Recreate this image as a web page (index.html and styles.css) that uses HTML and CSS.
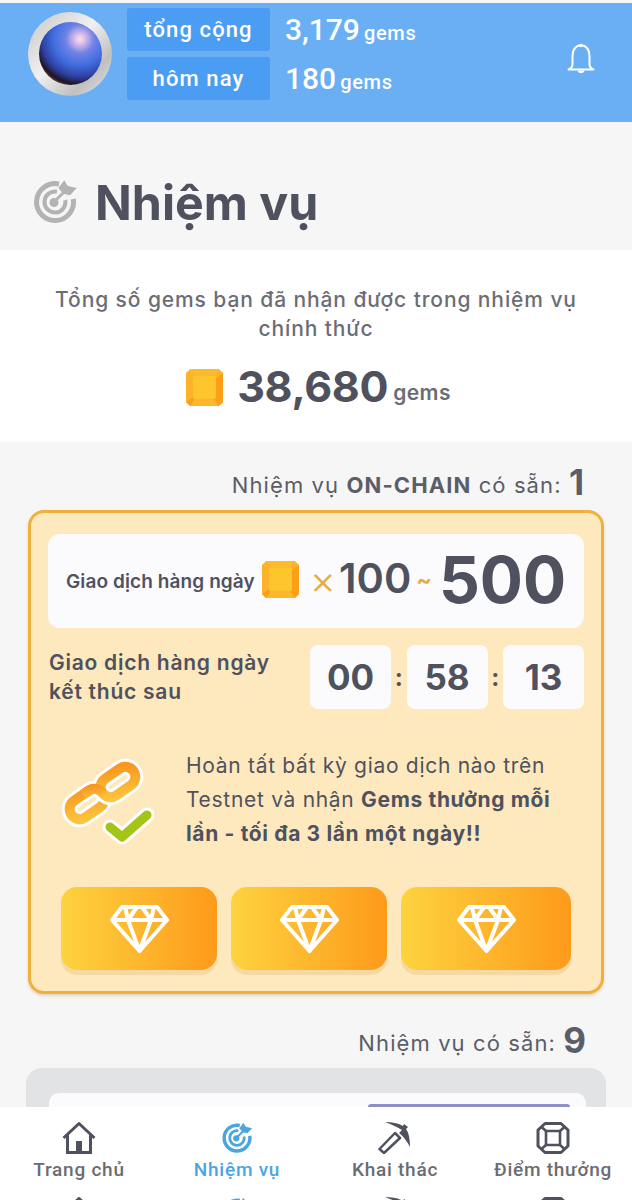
FILE: index.html
```html
<!DOCTYPE html>
<html lang="vi">
<head>
    <meta charset="UTF-8">
    <meta name="viewport" content="width=device-width, initial-scale=1.0">
    <title>Nhiệm vụ</title>
    <link rel="stylesheet" href="styles.css">
</head>
<body>
    <svg class="defs" width="0" height="0">
        <defs>
            <linearGradient id="chain" x1="0" y1="1" x2="1" y2="0">
                <stop offset="0" stop-color="#fcc63f"/>
                <stop offset="1" stop-color="#f7951d"/>
            </linearGradient>
            <radialGradient id="ball" cx="0.65" cy="0.27" r="0.82">
                <stop offset="0" stop-color="#fbe0ea"/>
                <stop offset="0.1" stop-color="#dcbce8"/>
                <stop offset="0.28" stop-color="#6f82e6"/>
                <stop offset="0.52" stop-color="#3f6ce0"/>
                <stop offset="0.74" stop-color="#2f3f9e"/>
                <stop offset="0.88" stop-color="#1e1428"/>
                <stop offset="1" stop-color="#8a4a24"/>
            </radialGradient>
            <linearGradient id="ring" x1="0" y1="0" x2="1" y2="1">
                <stop offset="0" stop-color="#c6c6c6"/>
                <stop offset="0.45" stop-color="#f0f0f0"/>
                <stop offset="0.75" stop-color="#c0c0c0"/>
                <stop offset="1" stop-color="#e6e6e6"/>
            </linearGradient>
            <symbol id="gem" viewBox="0 0 36 36">
                <path d="M4 0H32L36 4V32L32 36H4L0 32V4Z" fill="#fdb42a"/>
                <path d="M4 0H32L27 7H9Z" fill="#fdbb2c"/>
                <path d="M36 4V32L29 27V9Z" fill="#fc9f18"/>
                <path d="M0 4V32L7 27V9Z" fill="#fdb329"/>
                <path d="M4 36H32L27 29H9Z" fill="#fdb72a"/>
                <path d="M0 32L7 27L9 29L4 36Z M36 32L29 27L27 29L32 36Z" fill="#f8a01c"/>
                <rect x="7" y="7" width="22" height="22" fill="#fec62d"/>
            </symbol>
            <symbol id="target" viewBox="0 0 46 46">
                <path d="M27 5A18.500 18.500 0 1 0 41.300 20" fill="none" stroke="currentColor" stroke-width="5"/>
                <path d="M25 12.700A10.500 10.500 0 1 0 33.300 21" fill="none" stroke="currentColor" stroke-width="4"/>
                <circle cx="22" cy="23.500" r="4.500" fill="currentColor"/>
                <path d="M22 23L34 11" stroke="currentColor" stroke-width="3"/>
                <path d="M26.300 9L32.300 1.300L35.700 7L44.700 9L38 16.300L31.300 14.700Z" fill="currentColor"/>
            </symbol>
            <symbol id="diamond" viewBox="0 0 59 48">
                <path d="M12 2H47L57 15L29.500 46L2 15Z M2 15H57 M18 15L29.500 46L41 15 M15 2L18 15L27 2 M32 2L41 15L44 2" fill="none" stroke="#fff" stroke-width="4" stroke-linejoin="round"/>
            </symbol>
            <symbol id="home" viewBox="0 0 34 32">
                <path d="M1.500 16L17 1.500L32.500 16" fill="none" stroke="currentColor" stroke-width="3" stroke-linejoin="round"/>
                <path d="M5.500 13V30.500H28.500V13" fill="none" stroke="currentColor" stroke-width="3"/>
                <rect x="14" y="19" width="6" height="11" fill="currentColor"/>
            </symbol>
            <symbol id="pick" viewBox="0 0 34 32">
                <path d="M7 0C14 0 20 1 25 4L26 2L30 5L28 7C31 11 32 18 32 25C29 19 25 14 21 11L24 8C19 5 13 2 7 0Z" fill="currentColor"/>
                <path d="M17 11L22 16L6 31L1.500 27Z" fill="none" stroke="currentColor" stroke-width="2.500" stroke-linejoin="round"/>
            </symbol>
            <symbol id="jewel" viewBox="0 0 34 32">
                <g fill="none" stroke="currentColor" stroke-linejoin="round">
                    <path d="M9 1.500H25L32 8V24L25 30.500H9L2 24V8Z" stroke-width="3"/>
                    <rect x="10" y="9" width="14" height="14" stroke-width="2.600"/>
                    <path d="M5.500 5L10 9M28.500 5L24 9M5.500 27L10 23M28.500 27L24 23" stroke-width="2.600"/>
                </g>
            </symbol>
        </defs>
    </svg>

    <div class="page">
        <!-- top bar -->
        <header class="topbar">
            <svg class="avatar" viewBox="0 0 84 84">
                <circle cx="42" cy="42" r="42" fill="url(#ring)"/>
                <circle cx="42.500" cy="41.500" r="31.500" fill="url(#ball)"/>
            </svg>
            <div class="balances">
                <div class="balance-row">
                    <span class="balance-label">tổng cộng</span>
                    <span class="balance-value">3,179<small>gems</small></span>
                </div>
                <div class="balance-row">
                    <span class="balance-label">hôm nay</span>
                    <span class="balance-value">180<small>gems</small></span>
                </div>
            </div>
            <svg class="bell" viewBox="0 0 28 32">
                <path d="M14 2C8 3 5.500 7 5.500 13V21C5.500 24 4 25.500 1.500 26.500H26.500C24 25.500 22.500 24 22.500 21V13C22.500 7 20 3 14 2Z" fill="none" stroke="#fff" stroke-width="2" stroke-linejoin="round"/>
                <circle cx="14" cy="2.500" r="1.800" fill="#fff"/>
                <path d="M10.500 27.500H17.500C17 31 11 31 10.500 27.500Z" fill="#fff"/>
            </svg>
        </header>

        <section class="title-band">
            <svg class="title-icon"><use href="#target"/></svg>
            <h1>Nhiệm vụ</h1>
        </section>

        <section class="total">
            <p>Tổng số gems bạn đã nhận được trong nhiệm vụ<br>chính thức</p>
            <div class="total-amount">
                <svg class="gem-large"><use href="#gem"/></svg>
                <strong>38,680</strong><span>gems</span>
            </div>
        </section>

        <section class="missions">
            <div class="count">Nhiệm vụ <b>ON-CHAIN</b> có sẵn: <em>1</em></div>

            <div class="card">
                <div class="reward">
                    <span class="reward-name">Giao dịch hàng ngày</span>
                    <svg class="gem-large"><use href="#gem"/></svg>
                    <span class="reward-x">×</span>
                    <span class="reward-min">100</span>
                    <span class="reward-tilde">~</span>
                    <span class="reward-max">500</span>
                </div>

                <div class="timer">
                    <div class="timer-text">Giao dịch hàng ngày<br>kết thúc sau</div>
                    <div class="timer-boxes">
                        <span class="time-box">00</span><span class="time-sep">:</span>
                        <span class="time-box">58</span><span class="time-sep">:</span>
                        <span class="time-box">13</span>
                    </div>
                </div>

                <div class="desc">
                    <svg class="chain" viewBox="0 0 92 92">
                        <g fill="none">
                            <rect class="link-edge" x="6" y="40" width="38" height="20" rx="10" transform="rotate(-35 25 50)"/>
                            <rect class="link-fill" x="6" y="40" width="38" height="20" rx="10" transform="rotate(-35 25 50)"/>
                            <rect class="link-edge" x="37" y="18" width="38" height="20" rx="10" transform="rotate(-35 56 28)"/>
                            <rect class="link-fill" x="37" y="18" width="38" height="20" rx="10" transform="rotate(-35 56 28)"/>
                            <path class="link-fill" d="M27 40H34A10 10 0 0 1 44 50" transform="rotate(-35 25 50)"/>
                            <path d="M48 73L60 83L85 61" stroke="#fff" stroke-width="15" stroke-linecap="round" stroke-linejoin="round"/>
                            <path d="M48 73L60 83L85 61" stroke="#a2c516" stroke-width="9" stroke-linecap="round" stroke-linejoin="round"/>
                        </g>
                    </svg>
                    <p>Hoàn tất bất kỳ giao dịch nào trên<br>Testnet và nhận <b>Gems thưởng mỗi<br>lần - tối đa 3 lần một ngày!!</b></p>
                </div>

                <div class="claims">
                    <div class="claim"><svg class="claim-icon"><use href="#diamond"/></svg></div>
                    <div class="claim"><svg class="claim-icon"><use href="#diamond"/></svg></div>
                    <div class="claim claim-wide"><svg class="claim-icon"><use href="#diamond"/></svg></div>
                </div>
            </div>

            <div class="count count-next">Nhiệm vụ có sẵn: <em>9</em></div>

            <div class="card-grey">
                <div class="card-grey-inner">
                    <div class="tag"></div>
                </div>
            </div>
        </section>

        <!-- bottom nav sits over the list -->
        <nav class="bottom-nav">
            <a class="nav-item"><svg class="nav-icon"><use href="#home"/></svg>Trang chủ</a>
            <a class="nav-item active"><svg class="nav-icon"><use href="#target"/></svg>Nhiệm vụ</a>
            <a class="nav-item"><svg class="nav-icon"><use href="#pick"/></svg>Khai thác</a>
            <a class="nav-item"><svg class="nav-icon"><use href="#jewel"/></svg>Điểm thưởng</a>
            <a class="nav-item"><svg class="nav-icon"><use href="#home"/></svg></a>
            <a class="nav-item active"><svg class="nav-icon"><use href="#target"/></svg></a>
            <a class="nav-item"><svg class="nav-icon"><use href="#pick"/></svg></a>
            <a class="nav-item"><svg class="nav-icon"><use href="#jewel"/></svg></a>
        </nav>
    </div>
</body>
</html>
```

FILE: styles.css
```css
body {
    font-family: Inter, "Noto Sans", sans-serif;
    margin: 0;
    padding: 0;
    background-color: #f6f6f7;
    color: #4f525e;
}

.defs {
    display: block;
    height: 0;
}

.page {
    position: relative;
    height: 1200px;
    overflow: hidden;
    padding-top: 3px;
    box-sizing: border-box;
    background-color: #f6f6f7;
}

/* top bar */
.topbar {
    display: flex;
    height: 119px;
    padding: 5px 37px 0 28px;
    box-sizing: border-box;
    background-color: #6aaef3;
    color: #fff;
}

.avatar {
    width: 84px;
    height: 84px;
    margin: 4px 15px 0 0;
    flex: none;
}

.balances {
    display: flex;
    flex-direction: column;
    gap: 6px;
}

.balance-row {
    display: flex;
    align-items: center;
    gap: 15px;
}

.balance-label {
    width: 143px;
    height: 43px;
    line-height: 43px;
    text-align: center;
    background-color: #4a9df2;
    border-radius: 3px;
    font-family: Roboto, sans-serif;
    font-size: 22px;
    font-weight: 500;
    letter-spacing: 1.1px;
}

.balance-value {
    font-family: Roboto, sans-serif;
    font-size: 30px;
    font-weight: 500;
}

.balance-value small {
    font-size: 20px;
    margin-left: 4px;
    letter-spacing: 0.7px;
}

.bell {
    width: 28px;
    height: 32px;
    margin: 35px 0 0 auto;
}

/* title */
.title-band {
    display: flex;
    align-items: center;
    height: 128px;
    padding: 0 0 0 32px;
    box-sizing: border-box;
}

.title-icon {
    width: 46px;
    height: 46px;
    color: #b3b3b3;
    margin: 32px 17px 0 0;
}

h1 {
    margin: 34px 0 0;
    font-size: 48.3px;
    font-weight: 700;
    line-height: 60px;
}

/* total gems */
.total {
    height: 192px;
    padding-top: 35px;
    box-sizing: border-box;
    background-color: #fff;
    text-align: center;
}

.total p {
    margin: 0;
    font-size: 21px;
    font-weight: 500;
    line-height: 29px;
    color: #6b6d76;
    letter-spacing: 0.9px;
}

.total-amount {
    display: flex;
    align-items: center;
    justify-content: center;
    margin-top: 15px;
    padding-left: 5px;
}

.total-amount strong {
    font-size: 43px;
    font-weight: 700;
    line-height: 56px;
    letter-spacing: -0.3px;
    margin: 0 0 2px 14px;
}

.total-amount span {
    font-size: 21px;
    font-weight: 600;
    letter-spacing: 0.4px;
    color: #6b6d76;
    margin: 10px 0 0 5px;
}

.gem-large {
    width: 37px;
    height: 37px;
    flex: none;
}

/* mission list */
.missions {
    padding: 24px 28px 0 28px;
}

.count {
    height: 44px;
    text-align: right;
    font-size: 22px;
    line-height: 33px;
    letter-spacing: 1.1px;
    color: #5b5d68;
    padding-right: 20px;
}

.count b {
    font-weight: 700;
}

.count em {
    font-style: normal;
    font-weight: 700;
    font-size: 35px;
    letter-spacing: 0;
    vertical-align: -2px;
}

.count-next {
    margin-top: 28px;
    height: 46px;
    line-height: 36px;
    padding-right: 18px;
}

.card {
    height: 484px;
    padding: 21px 17px 0;
    box-sizing: border-box;
    background-color: #fee8bd;
    border: 3px solid #efb13c;
    border-radius: 16px;
    box-shadow: 0 2px 3px rgba(180, 140, 60, 0.3);
}

.reward {
    display: flex;
    align-items: center;
    height: 94px;
    padding: 0 19px 3px 18px;
    box-sizing: border-box;
    background-color: #fbfbfe;
    border-radius: 12px;
}

.reward-name {
    font-size: 19px;
    font-weight: 600;
    letter-spacing: 0.1px;
    margin: 3px 7px 0 0;
    white-space: nowrap;
}

.reward-x {
    font-size: 40px;
    font-weight: 300;
    color: #e8ac3e;
    margin-left: 11px;
}

.reward-min {
    font-size: 41.5px;
    font-weight: 600;
    margin: 0 0 3px 3px;
}

.reward-tilde {
    font-size: 23px;
    font-weight: 700;
    color: #e8ac3e;
    margin: 0 7px 0 5px;
}

.reward-max {
    font-size: 64px;
    font-weight: 700;
}

.timer {
    display: flex;
    justify-content: space-between;
    align-items: center;
    margin-top: 17px;
    padding-left: 1px;
}

.timer-text {
    font-size: 21px;
    line-height: 29px;
    font-weight: 600;
    letter-spacing: 0.75px;
}

.timer-boxes {
    display: flex;
    align-items: center;
}

.time-box {
    width: 81px;
    height: 64px;
    line-height: 64px;
    text-align: center;
    background-color: #fbfbfe;
    border-radius: 8px;
    font-size: 35px;
    font-weight: 700;
}

.time-sep {
    width: 15.5px;
    text-align: center;
    font-size: 24px;
    font-weight: 700;
}

.desc {
    display: flex;
    margin-top: 40px;
    padding-left: 14px;
}

.chain {
    width: 92px;
    height: 92px;
    margin: 5px 32px 0 0;
    flex: none;
}

.link-edge {
    stroke: #fff;
    stroke-width: 16;
}

.link-fill {
    stroke: url(#chain);
    stroke-width: 10;
}

.desc p {
    margin: 0;
    font-size: 21px;
    line-height: 34px;
    font-weight: 400;
    letter-spacing: 0.7px;
}

.desc b {
    font-weight: 700;
    letter-spacing: 0.65px;
}

.claims {
    display: flex;
    gap: 14px;
    margin-top: 36px;
    padding-left: 13px;
}

.claim {
    display: flex;
    align-items: center;
    justify-content: center;
    width: 156px;
    height: 83px;
    background: linear-gradient(90deg, #fdd33f, #fe9a1b);
    border-radius: 16px;
    box-shadow: 0 5px 0 #f5d9a5;
}

.claim-wide {
    width: 170px;
}

.claim-icon {
    width: 59px;
    height: 48px;
}

.card-grey {
    height: 200px;
    margin: 0 -2px;
    padding: 25px 20px 0 23px;
    box-sizing: border-box;
    background-color: #e2e3e5;
    border-radius: 16px;
}

.card-grey-inner {
    display: flex;
    justify-content: flex-end;
    height: 160px;
    padding: 11px 16px 0 0;
    box-sizing: border-box;
    background-color: #fbfbfe;
    border-radius: 10px;
}

.tag {
    width: 202px;
    height: 60px;
    background-color: #8f91c6;
    border-radius: 3px;
}

/* bottom nav */
.bottom-nav {
    position: absolute;
    left: 0;
    right: 0;
    bottom: 0;
    height: 93px;
    overflow: hidden;
    display: grid;
    grid-template-columns: 158px 158px 158px 158px;
    grid-auto-rows: 75px;
    padding-top: 15px;
    box-sizing: border-box;
    background-color: #fff;
}

.nav-item {
    display: flex;
    flex-direction: column;
    align-items: center;
    font-family: Roboto, sans-serif;
    font-size: 19px;
    font-weight: 500;
    line-height: 24px;
    letter-spacing: 0.75px;
    color: #6a6c74;
    white-space: nowrap;
}

.nav-item.active {
    color: #4ba6dd;
}

.nav-icon {
    width: 34px;
    height: 32px;
    margin-bottom: 4px;
    color: #4f525e;
}

.active .nav-icon {
    color: #4ba6dd;
}
```
